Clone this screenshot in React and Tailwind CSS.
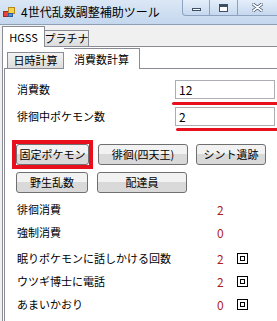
import React from "react"

const font = { fontFamily: '"Noto Sans CJK JP", "Noto Sans", sans-serif' }

function AppIcon() {
  return (
    <svg width="12" height="12" viewBox="0 0 12 12">
      <rect x="0.5" y="5.5" width="5" height="5" fill="#e8423a" stroke="#9b2a22" />
      <rect x="5.5" y="1.5" width="6" height="6" fill="#f4d34a" stroke="#b58a1c" />
      <rect x="5.5" y="7.5" width="4" height="3" fill="#5a8fd8" stroke="#2f5c9c" />
    </svg>
  )
}

function CaptionButtons() {
  return (
    <div className="ml-auto flex self-start">
      <div className="flex h-[16px] w-[28px] items-center justify-center rounded-bl-[4px] border border-t-0 border-[#8ba2c1] bg-gradient-to-b from-[#e4eefa] to-[#c6d8ee]">
        <div className="mt-[4px] h-[3px] w-[9px] border border-[#3d4f66] bg-white" />
      </div>
      <div className="flex h-[16px] w-[27px] items-center justify-center border-b border-[#8ba2c1] bg-gradient-to-b from-[#e4eefa] to-[#c6d8ee]">
        <div className="h-[8px] w-[9px] border border-[#3d4f66] border-t-[3px] bg-white" />
      </div>
      <div className="flex h-[16px] w-[40px] items-center justify-center border-b border-l border-[#8ba2c1] bg-gradient-to-b from-[#e4eefa] to-[#c6d8ee]">
        <svg width="11" height="9" viewBox="0 0 11 9">
          <path d="M1 1 L10 8 M10 1 L1 8" stroke="#3d4f66" strokeWidth="3.2" strokeLinecap="round" />
          <path d="M1 1 L10 8 M10 1 L1 8" stroke="#ffffff" strokeWidth="1.6" strokeLinecap="round" />
        </svg>
      </div>
    </div>
  )
}

function Tab({ label, selected, className = "" }) {
  return selected ? (
    <div className={`relative z-10 -mb-px flex h-[21px] items-center justify-center whitespace-nowrap border border-b-0 border-[#898c95] bg-white text-[11px] leading-none text-black ${className}`}>
      {label}
    </div>
  ) : (
    <div className={`flex h-[16px] items-center justify-center whitespace-nowrap border border-b-0 border-[#898c95] bg-gradient-to-b from-[#f3f3f3] to-[#dcdcdc] text-[11px] leading-none text-black ${className}`}>
      {label}
    </div>
  )
}

function WinButton({ label, className = "" }) {
  return (
    <div className={`flex h-[21px] items-center justify-center whitespace-nowrap rounded-[3px] border border-[#707070] bg-gradient-to-b from-[#f2f2f2] from-50% to-[#d9d9d9] to-50% text-[11px] leading-none text-black ${className}`}>
      {label}
    </div>
  )
}

function CheckIcon() {
  return (
    <svg width="11" height="11" viewBox="0 0 11 11">
      <rect x="0.5" y="0.5" width="10" height="10" fill="white" stroke="#000" />
      <rect x="3.5" y="3.5" width="4" height="4" fill="white" stroke="#000" />
    </svg>
  )
}

const counts = [
  { label: "徘徊消費", value: "2", cls: "" },
  { label: "強制消費", value: "0", cls: "" },
  { label: "眠りポケモンに話しかける回数", value: "2", check: true, cls: "mt-[3px]" },
  { label: "ウツギ博士に電話", value: "2", check: true, cls: "" },
  { label: "あまいかおり", value: "0", check: true, cls: "" },
]

export default function App() {
  return (
    <div className="flex h-[321px] w-[277px] flex-col overflow-hidden bg-[#f0f0f0]" style={font}>
      <div className="flex h-[25px] shrink-0 items-center border-b border-[#8e9fb5] bg-gradient-to-b from-[#dbe7f5] to-[#c4d7ee] pl-[3px]">
        <AppIcon />
        <span className="ml-[6px] whitespace-nowrap text-[12px] leading-none text-black">4世代乱数調整補助ツール</span>
        <CaptionButtons />
      </div>

      <div className="flex h-[21px] shrink-0 items-end pl-[2px]">
        <Tab label="HGSS" selected className="w-[43px]" />
        <Tab label="プラチナ" className="w-[44px] border-l-0" />
      </div>

      <div className="ml-[2px] flex min-h-0 flex-1 flex-col border-l border-t border-[#898c95] bg-white">
        <div className="flex h-[21px] shrink-0 items-end pl-[4px]">
          <Tab label="日時計算" className="w-[57px]" />
          <Tab label="消費数計算" selected className="w-[76px] border-l-0" />
        </div>

        <div className="ml-[1px] flex min-h-0 flex-1 flex-col border-l border-t border-[#898c95] pl-[12px] text-[11px] leading-none text-black">
          <div className="mt-[11px] flex h-[19px] shrink-0 items-center">
            <span className="w-[158px] whitespace-nowrap">消費数</span>
            <div className="flex h-[19px] w-[100px] items-center border border-[#abadb3] pl-[3px] text-[12px]">12</div>
          </div>
          <div className="ml-[155px] mt-[3px] h-[3px] w-[120px] shrink-0 rounded-full bg-[#e8101c]" />
          <div className="mt-[2px] flex h-[19px] shrink-0 items-center">
            <span className="w-[158px] whitespace-nowrap">徘徊中ポケモン数</span>
            <div className="flex h-[19px] w-[100px] items-center border border-[#abadb3] pl-[3px] text-[12px]">2</div>
          </div>
          <div className="ml-[159px] mt-[2px] h-[3px] w-[120px] shrink-0 rounded-full bg-[#e8101c]" />

          <div className="mt-[12px] flex h-[22px] shrink-0 items-center">
            <div className="-ml-[5px] border-[4px] border-[#e8101c]">
              <WinButton label="固定ポケモン" className="h-[14px] w-[73px]" />
            </div>
            <WinButton label="徘徊(四天王)" className="ml-[5px] w-[90px]" />
            <WinButton label="シント遺跡" className="ml-[8px] w-[70px]" />
          </div>
          <div className="mt-[7px] flex h-[21px] shrink-0 items-center">
            <WinButton label="野生乱数" className="ml-[-1px] w-[72px]" />
            <WinButton label="配達員" className="ml-[9px] w-[90px]" />
          </div>

          <div className="mt-[5px] flex shrink-0 flex-col">
            {counts.map((c) => (
              <div key={c.label} className={`flex h-[23px] items-center ${c.cls}`}>
                <span className="w-[200px] whitespace-nowrap">{c.label}</span>
                <span className="w-[20px] text-[12px] text-[#b01e1e]">{c.value}</span>
                {c.check && <CheckIcon />}
              </div>
            ))}
          </div>
        </div>
      </div>
    </div>
  )
}
